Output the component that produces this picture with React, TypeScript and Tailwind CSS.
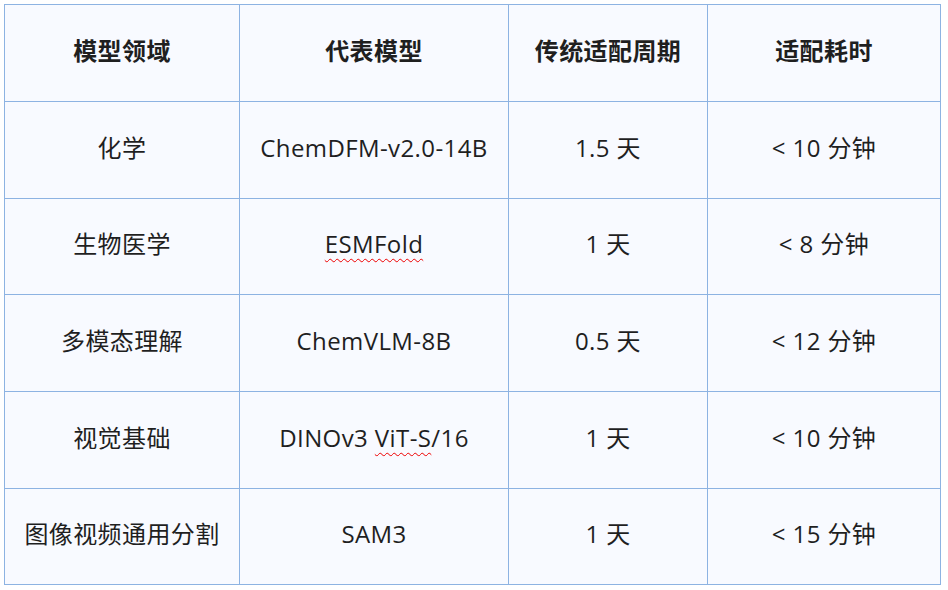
import React from 'react';

const headers = ['模型领域', '代表模型', '传统适配周期', '适配耗时'];

const rows: { domain: string; model: React.ReactNode; cycle: string; time: string }[] = [
  { domain: '化学', model: 'ChemDFM-v2.0-14B', cycle: '1.5 天', time: '< 10 分钟' },
  {
    domain: '生物医学',
    model: <span className="underline decoration-wavy decoration-[#e00] decoration-1 underline-offset-[5px]">ESMFold</span>,
    cycle: '1 天',
    time: '< 8 分钟',
  },
  { domain: '多模态理解', model: 'ChemVLM-8B', cycle: '0.5 天', time: '< 12 分钟' },
  {
    domain: '视觉基础',
    model: (
      <span>
        DINOv3{' '}
        <span className="underline decoration-wavy decoration-[#e00] decoration-1 underline-offset-[5px]">ViT-S</span>
        /16
      </span>
    ),
    cycle: '1 天',
    time: '< 10 分钟',
  },
  { domain: '图像视频通用分割', model: 'SAM3', cycle: '1 天', time: '< 15 分钟' },
];

const rowHeights = ['h-[97px]', 'h-[97px]', 'h-[96px]', 'h-[97px]', 'h-[97px]', 'h-[96px]'];
const colWidths = ['w-[235px]', 'w-[269px]', 'w-[199px]', 'w-[233px]'];

const Cell: React.FC<{ h: string; w: string; bold?: boolean; children: React.ReactNode }> = ({ h, w, bold, children }) => (
  <div
    className={`${h} ${w} flex items-center justify-center pb-[5px] whitespace-pre border-r border-b border-[#8db3e2] ${
      bold ? 'font-bold' : 'font-normal'
    }`}
  >
    {children}
  </div>
);

export default function App() {
  return (
    <div className="w-[948px] h-[590px] bg-white pt-[4px] pl-[4px]">
      <div
        className="inline-flex flex-col border-l border-t border-[#8db3e2] bg-[#f8faff] text-[#1f1f1f] text-[24px] tracking-[0.4px]"
        style={{ fontFamily: '"Open Sans", "Noto Sans CJK SC", sans-serif' }}
      >
        <div className="flex">
          {headers.map((t, i) => (
            <Cell key={t} h={rowHeights[0]} w={colWidths[i]} bold>
              {t}
            </Cell>
          ))}
        </div>
        {rows.map((r, ri) => (
          <div className="flex" key={r.domain}>
            <Cell h={rowHeights[ri + 1]} w={colWidths[0]}>{r.domain}</Cell>
            <Cell h={rowHeights[ri + 1]} w={colWidths[1]}>{r.model}</Cell>
            <Cell h={rowHeights[ri + 1]} w={colWidths[2]}>{r.cycle}</Cell>
            <Cell h={rowHeights[ri + 1]} w={colWidths[3]}>{r.time}</Cell>
          </div>
        ))}
      </div>
    </div>
  );
}
